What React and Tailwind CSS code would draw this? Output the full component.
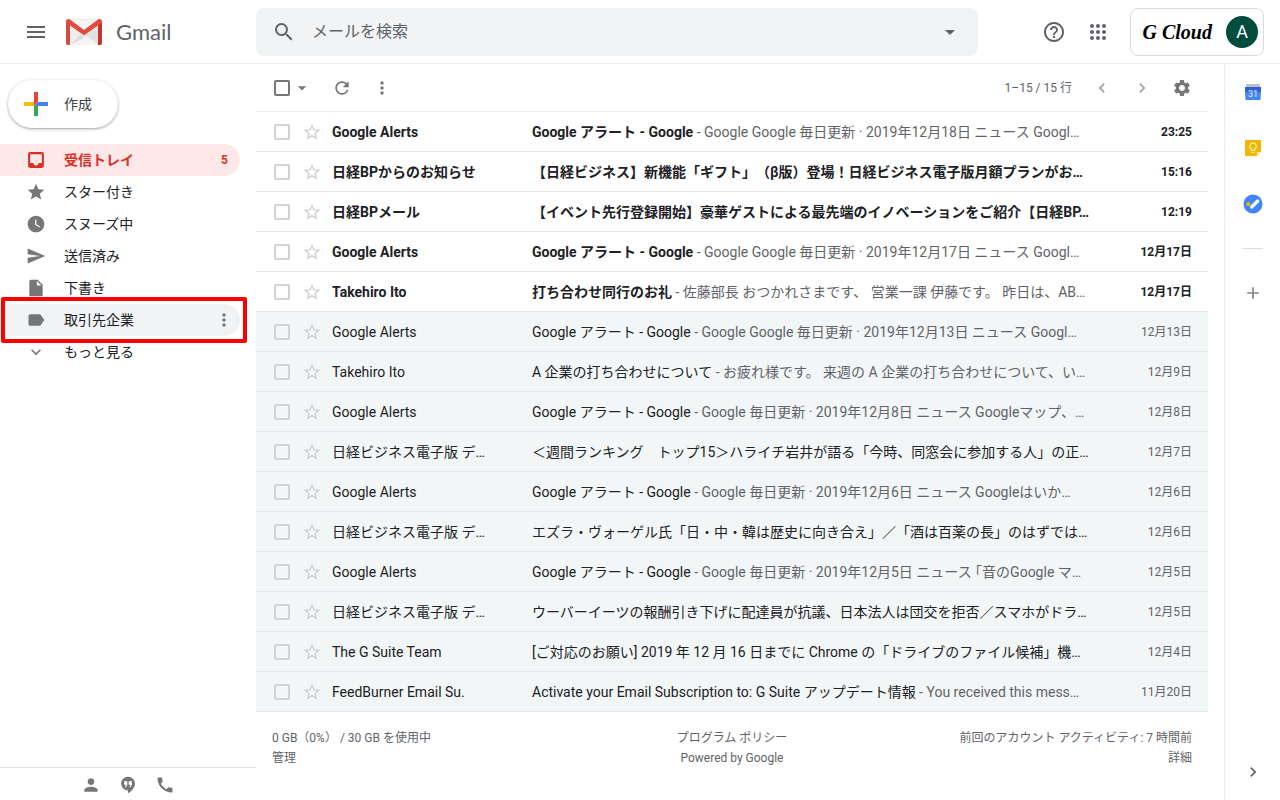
import React from 'react';
import {
    MdMenu,
    MdSearch,
    MdArrowDropDown,
    MdHelpOutline,
    MdStar,
    MdStarBorder,
    MdWatchLater,
    MdSend,
    MdInsertDriveFile,
    MdLabel,
    MdExpandMore,
    MdMoreVert,
    MdRefresh,
    MdSettings,
    MdChevronLeft,
    MdChevronRight,
    MdPerson,
    MdCall,
    MdAdd,
} from 'react-icons/md';

const InboxIcon = ({ size, className }) => (
    <svg width={size} height={size} viewBox="0 0 24 24" fill="currentColor" className={className} aria-hidden="true">
        <path d="M19 2.500H5A2.500 2.500 0 0 0 2.500 5v14A2.500 2.500 0 0 0 5 21.500h14a2.500 2.500 0 0 0 2.500-2.500V5A2.500 2.500 0 0 0 19 2.500zm0 13h-4a3 3 0 0 1-6 0H5V5h14v10.500z" />
    </svg>
);

const folders = [
    { label: '受信トレイ', icon: InboxIcon, count: 5, active: true },
    { label: 'スター付き', icon: MdStar },
    { label: 'スヌーズ中', icon: MdWatchLater },
    { label: '送信済み', icon: MdSend },
    { label: '下書き', icon: MdInsertDriveFile },
    { label: '取引先企業', icon: MdLabel, marked: true },
    { label: 'もっと見る', icon: MdExpandMore },
];

const mails = [
    { from: 'Google Alerts', subject: 'Google アラート - Google', snippet: 'Google Google 毎日更新 · 2019年12月18日 ニュース Googl…', date: '23:25', unread: true },
    { from: '日経BPからのお知らせ', subject: '【日経ビジネス】新機能「ギフト」（β版）登場！日経ビジネス電子版月額プランがお…', date: '15:16', unread: true },
    { from: '日経BPメール', subject: '【イベント先行登録開始】豪華ゲストによる最先端のイノベーションをご紹介【日経BP…', date: '12:19', unread: true },
    { from: 'Google Alerts', subject: 'Google アラート - Google', snippet: 'Google Google 毎日更新 · 2019年12月17日 ニュース Googl…', date: '12月17日', unread: true },
    { from: 'Takehiro Ito', subject: '打ち合わせ同行のお礼', snippet: '佐藤部長 おつかれさまです、 営業一課 伊藤です。 昨日は、AB…', date: '12月17日', unread: true },
    { from: 'Google Alerts', subject: 'Google アラート - Google', snippet: 'Google Google 毎日更新 · 2019年12月13日 ニュース Googl…', date: '12月13日' },
    { from: 'Takehiro Ito', subject: 'A 企業の打ち合わせについて', snippet: 'お疲れ様です。 来週の A 企業の打ち合わせについて、い…', date: '12月9日' },
    { from: 'Google Alerts', subject: 'Google アラート - Google', snippet: 'Google 毎日更新 · 2019年12月8日 ニュース Googleマップ、…', date: '12月8日' },
    { from: '日経ビジネス電子版 デ…', subject: '＜週間ランキング　トップ15＞ハライチ岩井が語る「今時、同窓会に参加する人」の正…', date: '12月7日' },
    { from: 'Google Alerts', subject: 'Google アラート - Google', snippet: 'Google 毎日更新 · 2019年12月6日 ニュース Googleはいか…', date: '12月6日' },
    { from: '日経ビジネス電子版 デ…', subject: 'エズラ・ヴォーゲル氏「日・中・韓は歴史に向き合え」／「酒は百薬の長」のはずでは…', date: '12月6日' },
    { from: 'Google Alerts', subject: 'Google アラート - Google', snippet: 'Google 毎日更新 · 2019年12月5日 ニュース ｢音のGoogle マ…', date: '12月5日' },
    { from: '日経ビジネス電子版 デ…', subject: 'ウーバーイーツの報酬引き下げに配達員が抗議、日本法人は団交を拒否／スマホがドラ…', date: '12月5日' },
    { from: 'The G Suite Team', subject: '[ご対応のお願い] 2019 年 12 月 16 日までに Chrome の「ドライブのファイル候補」機…', date: '12月4日' },
    { from: 'FeedBurner Email Su.', subject: 'Activate your Email Subscription to: G Suite アップデート情報', snippet: 'You received this mess…', date: '11月20日' },
];

const GmailLogo = () => (
    <svg width="36" height="26" viewBox="0 0 36 26" aria-hidden="true">
        <path d="M2 0h32v26H2z" fill="#e9e9e9" />
        <path d="M4 26 14 16l4 3 4-3 10 10z" fill="#f5f5f5" />
        <path d="M4 26 14 16l4 3z" fill="#dcdcdc" />
        <path d="M4 7v19L15 15z" fill="#efefef" />
        <path d="m4 5 28 21V5z" fill="#d8d8d8" opacity=".45" />
        <path d="M3 1h30L18 12z" fill="#f4f4f4" />
        <path d="M0 3v21a2 2 0 0 0 2 2h2V5z" fill="#d54b3d" />
        <path d="M36 3v21a2 2 0 0 1-2 2h-2V5z" fill="#c0392b" />
        <path d="M2.400 0C1 0 0 1.100 0 2.500 0 3.500.4 4 1.200 4.600L18 16.200 34.800 4.600C35.600 4 36 3.500 36 2.500 36 1.100 35 0 33.600 0c-.6 0-1 .2-1.600.6L18 11 4 .6C3.400.2 3 0 2.400 0z" fill="#e04a3f" />
    </svg>
);

const AppsIcon = () => (
    <svg width="24" height="24" viewBox="0 0 24 24" fill="currentColor" aria-hidden="true">
        {[6, 12, 18].map((y) => [6, 12, 18].map((x) => <circle key={`${x}-${y}`} cx={x} cy={y} r="2" />))}
    </svg>
);

const ComposePlus = () => (
    <svg width="24" height="24" viewBox="0 0 24 24" aria-hidden="true">
        <path d="M10 0h4v10l-4 4z" fill="#ea4335" />
        <path d="M0 10h10v4H0z" fill="#fbbc04" />
        <path d="M10 14h4v10h-4z" fill="#34a853" />
        <path d="M14 10h10v4H10z" fill="#4285f4" />
    </svg>
);

const HangoutsIcon = () => (
    <svg width="20" height="20" viewBox="0 0 24 24" fill="#747678" aria-hidden="true">
        <path
            fillRule="evenodd"
            d="M12 2a8.300 8.300 0 0 0 0 16.600V22c4.700-2.500 8.300-6.800 8.300-11.700A8.300 8.300 0 0 0 12 2zM7.300 7.500h3.900v4.200l-1.600 2.900H8.300l1.300-2.900H7.300zM12.800 7.500h3.900v4.200l-1.600 2.900h-1.300l1.300-2.900h-2.300z"
        />
    </svg>
);

const CalendarIcon = () => (
    <svg width="16" height="16" viewBox="0 0 16 16" aria-hidden="true">
        <path d="M1 0h14v4H1z" fill="#bdc1c6" />
        <path d="M0 3h16v5H0z" fill="#2f62d0" />
        <path d="M0 8h16l-.6 8H.6z" fill="#4285f4" />
        <text x="8" y="13" fontSize="9" textAnchor="middle" fill="#e8f0fe" fontFamily="Roboto, sans-serif">31</text>
    </svg>
);

const KeepIcon = () => (
    <svg width="16" height="16" viewBox="0 0 16 16" aria-hidden="true">
        <path d="M1 0h14a1 1 0 0 1 1 1v11l-4 4H1a1 1 0 0 1-1-1V1a1 1 0 0 1 1-1z" fill="#f4b400" />
        <path d="M16 12l-4 4v-4z" fill="#fde9b0" />
        <path d="M6.500 10.500V9.300a3.300 3.300 0 1 1 3 0v1.200zM6.500 12.500h3" fill="none" stroke="#fff3d0" strokeWidth="1.100" />
    </svg>
);

const TasksIcon = () => (
    <svg width="20" height="20" viewBox="0 0 20 20" aria-hidden="true">
        <circle cx="10" cy="10" r="9.500" fill="#4285f4" />
        <path d="m8.700 13 6-6" stroke="#fff" strokeWidth="3.200" strokeLinecap="round" />
        <circle cx="5.300" cy="10.300" r="2" fill="#f4b400" />
    </svg>
);

const Header = () => (
    <header className="flex h-16 shrink-0 items-center border-b border-[#ececec] pr-4 text-[#5f6368]">
        <div className="flex w-64 shrink-0 items-center pl-6">
            <button aria-label="メインメニュー"><MdMenu size={24} /></button>
            <a href="#" className="ml-[18px] flex items-center gap-[14px]">
                <GmailLogo />
                <span className="font-[Lato,sans-serif] text-[22px]">Gmail</span>
            </a>
        </div>
        <form className="flex h-12 max-w-[722px] flex-1 items-center rounded-lg bg-[#f1f3f4] px-4">
            <button type="button" aria-label="検索"><MdSearch size={24} /></button>
            <input
                type="text"
                aria-label="メールを検索"
                placeholder="メールを検索"
                className="ml-4 min-w-0 flex-1 bg-transparent text-base outline-none placeholder:text-[#5f6368]"
            />
            <button type="button" aria-label="検索オプション"><MdArrowDropDown size={24} /></button>
        </form>
        <div className="ml-auto flex items-center gap-5 pl-5">
            <button aria-label="サポート"><MdHelpOutline size={24} /></button>
            <button aria-label="Google アプリ"><AppsIcon /></button>
            <div className="flex h-12 items-center gap-[14px] rounded-lg border border-[#dadce0] pr-[5px] pl-3">
                <span className="font-['Liberation_Serif',serif] text-xl font-bold whitespace-nowrap text-black italic">G Cloud</span>
                <button className="flex size-8 items-center justify-center rounded-full bg-[#004d40] text-lg text-white">A</button>
            </div>
        </div>
    </header>
);

const FolderItem = ({ folder }) => {
    const Icon = folder.icon;
    let tone = 'text-[#202124]';
    if (folder.active) tone = 'bg-[#fce8e6] font-bold text-[#d93025]';
    if (folder.marked) tone = 'bg-[#f1f3f4] text-[#202124]';

    return (
        <li className="relative">
            <a href="#" className={`mr-4 flex h-8 items-center rounded-r-full pr-3 pl-[26px] text-sm ${tone}`}>
                <Icon size={20} className={folder.active ? '' : 'text-[#747678]'} />
                <span className="ml-[18px] flex-1">{folder.label}</span>
                {folder.count && <span className="text-xs">{folder.count}</span>}
            </a>
            {folder.marked && (
                <>
                    <button aria-label="ラベルのメニュー" className="absolute top-[6px] right-[22px] text-[#747678]">
                        <MdMoreVert size={20} />
                    </button>
                    <div className="pointer-events-none absolute -top-[7px] right-[9px] left-px h-[46px] rounded-xs border-4 border-[#ff0000]"></div>
                </>
            )}
        </li>
    );
};

const Sidebar = () => (
    <aside className="flex w-64 shrink-0 flex-col pt-4">
        <button className="ml-2 flex h-12 items-center gap-4 self-start rounded-full bg-white pr-[26px] pl-4 text-sm text-[#3c4043] shadow-[0_1px_2px_rgba(60,64,67,0.3),0_1px_3px_1px_rgba(60,64,67,0.15)]">
            <ComposePlus />
            作成
        </button>
        <ul className="mt-4">
            {folders.map((folder) => (
                <FolderItem key={folder.label} folder={folder} />
            ))}
        </ul>
        <div className="mt-auto flex h-[33px] items-center justify-center gap-[17px] border-t border-[#e0e0e0] pt-px text-[#747678]">
            <button aria-label="連絡先"><MdPerson size={20} /></button>
            <button aria-label="ハングアウト"><HangoutsIcon /></button>
            <button aria-label="電話"><MdCall size={20} /></button>
        </div>
    </aside>
);

const Toolbar = () => (
    <div className="flex h-12 items-center border-b border-[#ebeced] pr-4 pl-[18px] text-[#747678]">
        <input type="checkbox" aria-label="すべて選択" className="size-4 appearance-none rounded-xs border-2 border-[#747678]" />
        <button aria-label="選択" className="ml-[2px]"><MdArrowDropDown size={20} /></button>
        <button aria-label="更新" className="ml-5"><MdRefresh size={20} /></button>
        <button aria-label="その他" className="ml-5"><MdMoreVert size={20} /></button>
        <div className="ml-auto flex items-center gap-5">
            <span className="text-xs text-[#5f6368]">1–15 / 15 行</span>
            <button aria-label="前" className="text-[#a0a2a4]"><MdChevronLeft size={20} /></button>
            <button aria-label="次" className="text-[#a0a2a4]"><MdChevronRight size={20} /></button>
            <button aria-label="設定"><MdSettings size={20} /></button>
        </div>
    </div>
);

const MailRow = ({ mail }) => (
    <tr className={mail.unread ? 'bg-white font-bold text-[#202124]' : 'bg-[#f3f6f7] text-[#202124]'}>
        <td className="h-10 border-b border-[#e6e9ea] pl-[18px]">
            <div className="flex items-center gap-3">
                <input type="checkbox" aria-label={mail.subject} className="size-4 appearance-none rounded-xs border-2 border-[#d2d3d4]" />
                <button aria-label="スター" className="text-[#cfd0d1]"><MdStarBorder size={20} /></button>
            </div>
        </td>
        <td className="overflow-hidden border-b border-[#e6e9ea] whitespace-nowrap">{mail.from}</td>
        <td className="overflow-hidden border-b border-[#e6e9ea] whitespace-nowrap">
            {mail.subject}
            {mail.snippet && <span className="font-normal text-[#5f6368]"> - {mail.snippet}</span>}
        </td>
        <td className={`border-b border-[#e6e9ea] pr-4 text-right text-xs ${mail.unread ? '' : 'text-[#5f6368]'}`}>{mail.date}</td>
    </tr>
);

const Footer = () => (
    <footer className="grid grid-cols-3 px-4 pt-4 text-xs leading-5 text-[#5f6368]">
        <div>
            <p>0 GB（0%） / 30 GB を使用中</p>
            <a href="#">管理</a>
        </div>
        <div className="text-center">
            <a href="#">プログラム ポリシー</a>
            <p>Powered by Google</p>
        </div>
        <div className="text-right">
            <p>前回のアカウント アクティビティ: 7 時間前</p>
            <a href="#">詳細</a>
        </div>
    </footer>
);

const SidePanel = () => (
    <aside className="flex w-14 shrink-0 flex-col items-center border-l border-[#ececec]">
        <button aria-label="カレンダー" className="flex h-14 items-center"><CalendarIcon /></button>
        <button aria-label="Keep" className="flex h-14 items-center"><KeepIcon /></button>
        <button aria-label="ToDo リスト" className="flex h-14 items-center"><TasksIcon /></button>
        <hr className="my-4 w-5 border-[#dadce0]" />
        <button aria-label="アドオンを取得" className="flex h-14 items-center text-[#80868b]"><MdAdd size={20} /></button>
        <button aria-label="サイドパネルを非表示" className="mt-auto flex h-14 items-center text-[#5f6368]"><MdChevronRight size={20} /></button>
    </aside>
);

const App = () => {
    return (
        <div lang="ja" className="flex min-h-screen flex-col bg-white font-[Roboto,'Noto_Sans_CJK_JP',sans-serif] text-[#202124] [text-spacing-trim:space-all]">
            <Header />
            <div className="flex flex-1">
                <Sidebar />
                <main className="mr-4 min-w-0 flex-1">
                    <Toolbar />
                    <table className="w-full table-fixed border-separate border-spacing-0 text-sm">
                        <colgroup>
                            <col className="w-[76px]" />
                            <col className="w-[200px]" />
                            <col />
                            <col className="w-24" />
                        </colgroup>
                        <tbody>
                            {mails.map((mail, i) => (
                                <MailRow key={i} mail={mail} />
                            ))}
                        </tbody>
                    </table>
                    <Footer />
                </main>
                <SidePanel />
            </div>
        </div>
    );
};

export default App;
